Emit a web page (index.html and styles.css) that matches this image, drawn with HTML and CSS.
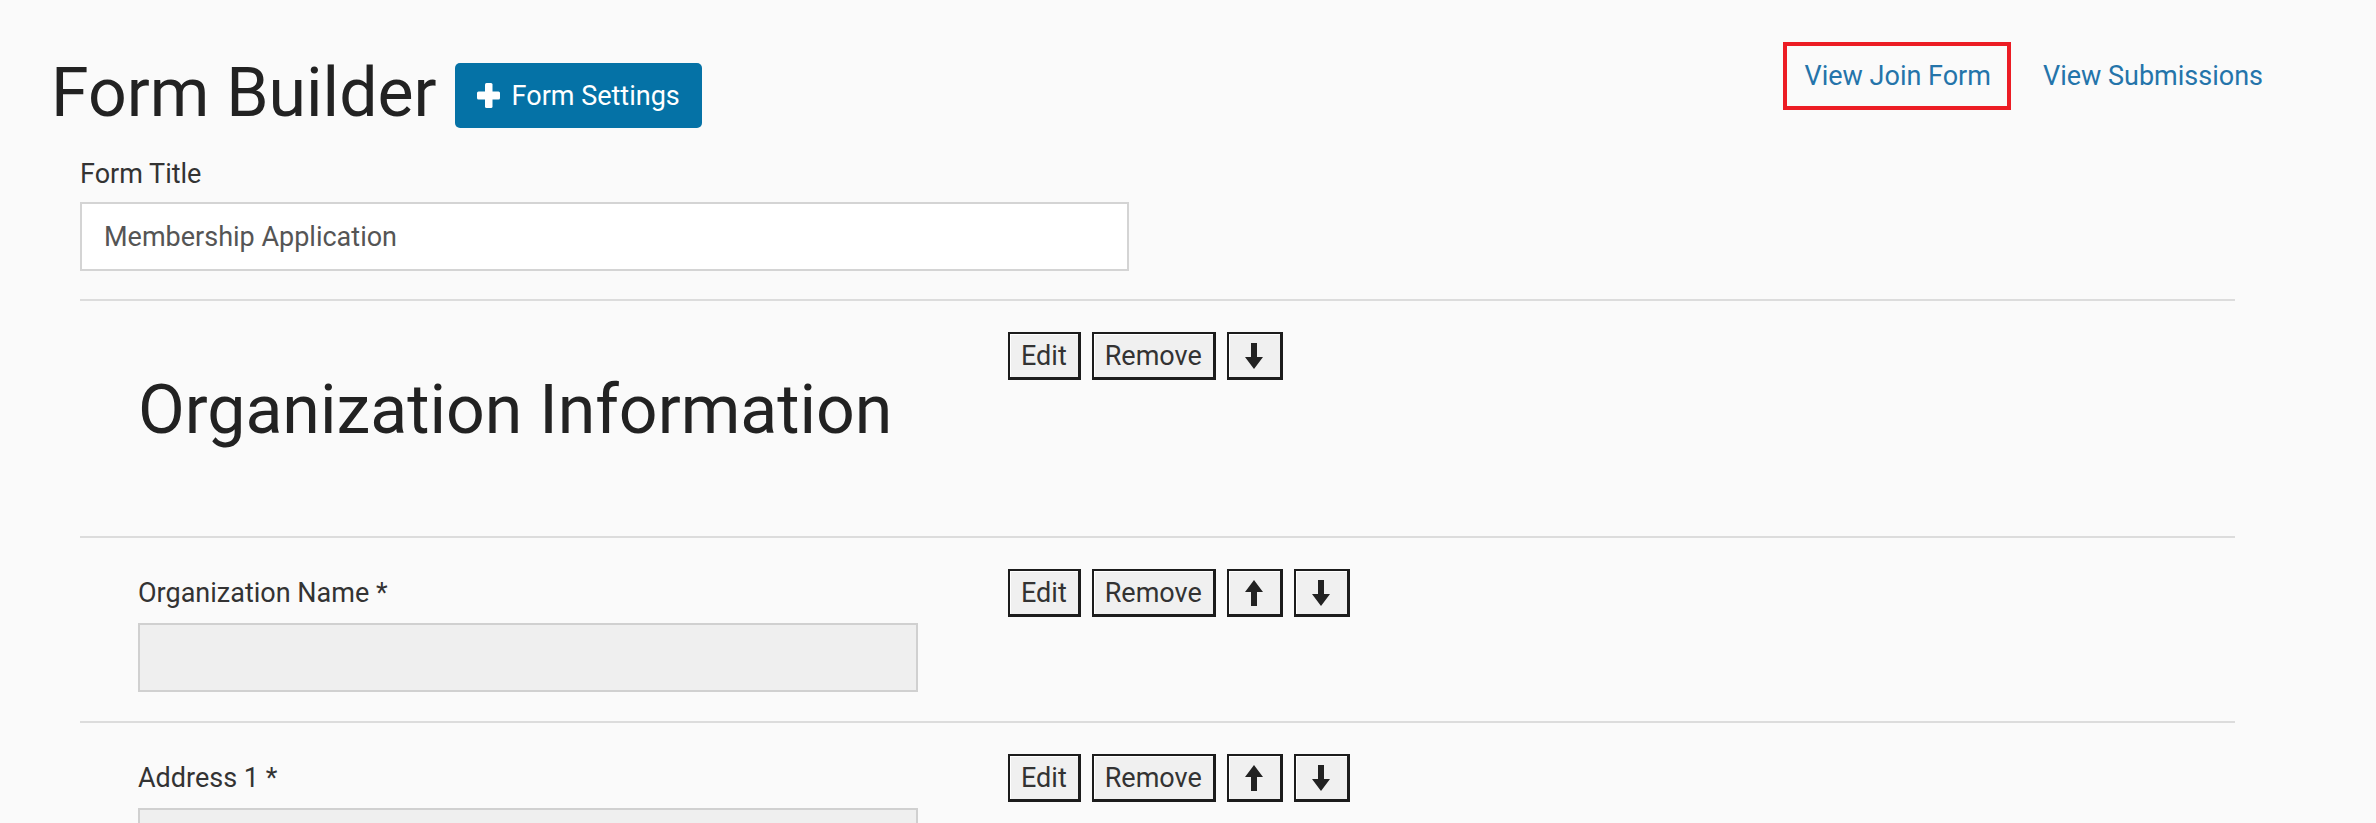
FILE: index.html
```html
<!DOCTYPE html>
<html>
<head>
    <title>Form Builder</title>
    <link rel="stylesheet" href="styles.css">
</head>
<body>
    <div class="header">
        <div class="title">
            <h1>Form Builder</h1>
            <button class="settings-btn">
                <svg class="plus" width="23" height="25" viewBox="0 0 23 25"><rect x="8" y="0" width="7.5" height="25" rx="1.5"/><rect x="0" y="8.5" width="23" height="8" rx="1.5"/></svg>
                Form Settings
            </button>
        </div>
        <div class="nav">
            <a href="#" class="nav-link marked">View Join Form</a>
            <a href="#" class="nav-link">View Submissions</a>
        </div>
    </div>

    <div class="form">
        <div class="form-title">
            <label>Form Title</label>
            <input type="text" class="title-input" value="Membership Application">
        </div>

        <div class="field-row">
            <div class="field-body">
                <h2>Organization Information</h2>
            </div>
            <div class="actions">
                <button class="act">Edit</button>
                <button class="act">Remove</button>
                <button class="act arrow"><svg width="18" height="26" viewBox="0 0 18 26"><polygon points="9,0 18,12 12,12 12,26 6,26 6,12 0,12" transform="rotate(180 9 13)"/></svg></button>
            </div>
        </div>

        <div class="field-row">
            <div class="field-body">
                <label>Organization Name *</label>
                <div class="fake-input"></div>
            </div>
            <div class="actions">
                <button class="act">Edit</button>
                <button class="act">Remove</button>
                <button class="act arrow"><svg width="18" height="26" viewBox="0 0 18 26"><polygon points="9,0 18,12 12,12 12,26 6,26 6,12 0,12"/></svg></button>
                <button class="act arrow"><svg width="18" height="26" viewBox="0 0 18 26"><polygon points="9,0 18,12 12,12 12,26 6,26 6,12 0,12" transform="rotate(180 9 13)"/></svg></button>
            </div>
        </div>

        <div class="field-row">
            <div class="field-body">
                <label>Address 1 *</label>
                <div class="fake-input"></div>
            </div>
            <div class="actions">
                <button class="act">Edit</button>
                <button class="act">Remove</button>
                <button class="act arrow"><svg width="18" height="26" viewBox="0 0 18 26"><polygon points="9,0 18,12 12,12 12,26 6,26 6,12 0,12"/></svg></button>
                <button class="act arrow"><svg width="18" height="26" viewBox="0 0 18 26"><polygon points="9,0 18,12 12,12 12,26 6,26 6,12 0,12" transform="rotate(180 9 13)"/></svg></button>
            </div>
        </div>
    </div>
</body>
</html>
```

FILE: styles.css
```css
body { margin: 0; background: #fafafa; font-family: Roboto, "Liberation Sans", sans-serif; font-size: 27px; color: #333; }

.header { display: flex; justify-content: space-between; align-items: flex-start; padding: 42px 93px 0 51px; }
.title { display: flex; align-items: flex-start; }
h1 { margin: 13px 0 0; font-size: 68px; font-weight: 400; line-height: 76px; color: #222; }
.settings-btn { display: inline-flex; align-items: center; gap: 12px; height: 65px; margin: 21px 0 0 18px; padding: 0 22px; border: 0; border-radius: 5px; background: #0572a6; color: #fff; font-family: inherit; font-size: 27px; }
.plus { fill: #fff; }

.nav { display: flex; gap: 10px; }
.nav-link { display: block; line-height: 60px; padding: 0 16px 0 18px; border: 4px solid transparent; color: #2474aa; text-decoration: none; }
.nav-link.marked { border-color: #ec1c24; }

.form { margin-left: 80px; width: 2155px; }
.form-title { margin-top: 25px; padding-bottom: 28px; }
label { display: block; line-height: 37px; }
.title-input { display: block; box-sizing: border-box; width: 1049px; height: 69px; margin-top: 9px; padding: 0 22px; border: 2px solid #d4d4d4; background: #fff; font-family: inherit; font-size: 27px; color: #555; }

.field-row { display: grid; grid-template-columns: 870px 1fr; padding: 30px 0 29px 58px; border-top: 2px solid #dcdcdc; }
.field-body { padding-top: 7px; }
h2 { margin: 34px 0 59px; font-size: 68px; font-weight: 400; line-height: 76px; color: #222; }
.fake-input { box-sizing: border-box; width: 780px; height: 69px; margin-top: 11px; border: 2px solid #d0d0d0; background: #efefef; }

.actions { display: flex; gap: 11px; align-items: flex-start; padding-top: 1px; }
.act { box-sizing: border-box; height: 48px; padding: 0 11px; border: 2px solid #1c1c1c; border-right-width: 3px; border-bottom-width: 3px; box-shadow: inset 1px 1px #fff; background: #f0f0f0; color: #333; font-family: inherit; font-size: 27px; }
.arrow { display: flex; align-items: center; justify-content: center; width: 56px; padding: 0; }
.arrow svg { fill: #222; }
```
